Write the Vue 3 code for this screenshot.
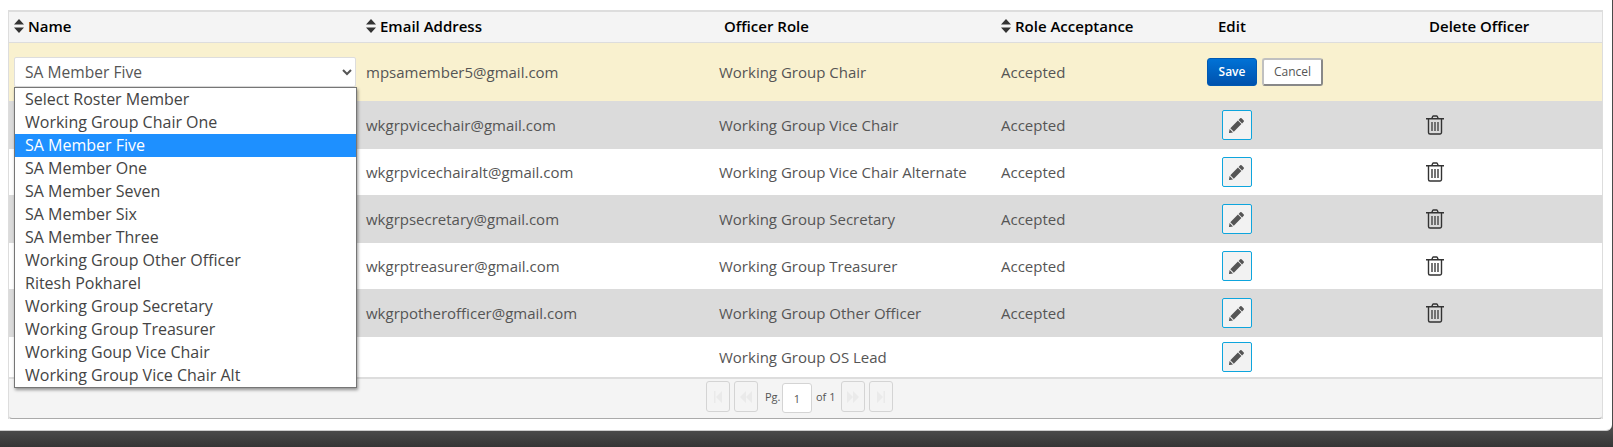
<script setup>
const options = ['Select Roster Member','Working Group Chair One','SA Member Five','SA Member One','SA Member Seven','SA Member Six','SA Member Three','Working Group Other Officer','Ritesh Pokharel','Working Group Secretary','Working Group Treasurer','Working Goup Vice Chair','Working Group Vice Chair Alt']
const rows = [
  { email: 'wkgrpvicechair@gmail.com', role: 'Working Group Vice Chair', acc: 'Accepted', del: true, cls: 'gray' },
  { email: 'wkgrpvicechairalt@gmail.com', role: 'Working Group Vice Chair Alternate', acc: 'Accepted', del: true, cls: 'white' },
  { email: 'wkgrpsecretary@gmail.com', role: 'Working Group Secretary', acc: 'Accepted', del: true, cls: 'gray' },
  { email: 'wkgrptreasurer@gmail.com', role: 'Working Group Treasurer', acc: 'Accepted', del: true, cls: 'white' },
  { email: 'wkgrpotherofficer@gmail.com', role: 'Working Group Other Officer', acc: 'Accepted', del: true, cls: 'gray' },
  { email: '', role: 'Working Group OS Lead', acc: '', del: false, cls: 'last' },
]
</script>

<template>
  <div class="page">
    <div class="modal">
      <div class="table">
        <div class="grid head">
          <div class="hc hc-name"><svg class="sort" viewBox="0 0 10 14"><path d="M5 0 10 5.6H0ZM5 14 0 8.4H10Z"/></svg>Name</div>
          <div class="hc hc-email"><svg class="sort" viewBox="0 0 10 14"><path d="M5 0 10 5.6H0ZM5 14 0 8.4H10Z"/></svg>Email Address</div>
          <div class="hc hc-role">Officer Role</div>
          <div class="hc hc-acc"><svg class="sort" viewBox="0 0 10 14"><path d="M5 0 10 5.6H0ZM5 14 0 8.4H10Z"/></svg>Role Acceptance</div>
          <div class="hc hc-edit">Edit</div>
          <div class="hc hc-del">Delete Officer</div>
        </div>
        <div class="grid row editing">
          <div class="cell cell-name">
            <select class="sel"><option>SA Member Five</option></select>
          </div>
          <div class="cell">mpsamember5@gmail.com</div>
          <div class="cell">Working Group Chair</div>
          <div class="cell">Accepted</div>
          <div class="cell btns">
            <button class="save">Save</button>
            <button class="cancel">Cancel</button>
          </div>
          <div class="cell"></div>
        </div>
        <div v-for="r in rows" :key="r.role" class="grid row" :class="r.cls">
          <div class="cell"></div>
          <div class="cell">{{ r.email }}</div>
          <div class="cell">{{ r.role }}</div>
          <div class="cell">{{ r.acc }}</div>
          <div class="cell">
            <button class="edit">
              <svg viewBox="0 0 16 16" class="pencil"><path d="M11.2 1.3a1 1 0 0 1 1.400 0l2.100 2.100a1 1 0 0 1 0 1.400l-1.600 1.600-3.500-3.500ZM8.900 3.600l3.500 3.500-7.600 7.600-3.500-3.500ZM.6 12l3.400 3.400-3.400.6a.5.5 0 0 1-.6-.6Z"/></svg>
            </button>
          </div>
          <div class="cell">
            <svg v-if="r.del" viewBox="0 0 18 20" class="trash"><path d="M0 3.800h18M2.500 4v13.500A1.500 1.500 0 0 0 4 19h10a1.500 1.500 0 0 0 1.500-1.500V4M5.800 3.500 6.800 1.300A.6.6 0 0 1 7.400 1h3.200a.6.6 0 0 1 .6.3l1 2.200" fill="none" stroke="#333" stroke-width="1.400"/><path d="M6 7v9M9 7v9M12 7v9" fill="none" stroke="#666" stroke-width="1.800"/></svg>
          </div>
        </div>
        <div class="foot">
          <div class="pager">
            <span class="pbtn"><svg viewBox="0 0 12 14" class="pi"><path d="M2 1v12h1.500V1ZM10 1 4 7l6 6Z"/></svg></span>
            <span class="pbtn"><svg viewBox="0 0 12 14" class="pi"><path d="M6 1 0 7l6 6ZM12 1 6 7l6 6Z"/></svg></span>
            <span class="pg">Pg.</span>
            <span class="pinput">1</span>
            <span class="of">of 1</span>
            <span class="pbtn"><svg viewBox="0 0 12 14" class="pi"><path d="M0 1l6 6-6 6ZM6 1l6 6-6 6Z"/></svg></span>
            <span class="pbtn"><svg viewBox="0 0 12 14" class="pi"><path d="M8.500 1v12H10V1ZM2 1l6 6-6 6Z"/></svg></span>
          </div>
        </div>
        <div class="menu">
          <div v-for="o in options" :key="o" class="opt" :class="{ on: o === 'SA Member Five' }">{{ o }}</div>
        </div>
      </div>
    </div>
  </div>
</template>

<style scoped>
.page { height: 447px; width: 1613px; background: linear-gradient(#4a4a4a 431px, #353535); font-family: "Open Sans", sans-serif; overflow: hidden; }
.modal { width: 1612px; height: 431px; box-sizing: border-box; background: #fff; padding: 10px 10px 0 8px; border-radius: 0 0 6px 0; border-bottom: 1px solid #ccc; }
.table { position: relative; border-left: 1px solid #ddd; border-right: 1px solid #ddd; width: 1595px; box-sizing: border-box; }
.grid { display: grid; grid-template-columns: 357px 353px 282px 206px 219px 176px; align-items: center; }
.head { height: 33px; box-sizing: border-box; border-top: 2px solid #ddd; border-bottom: 1px solid #ddd; background: #f4f4f4; font-size: 15px; font-weight: 600; color: #000; padding-bottom: 2px; }
.hc { display: flex; align-items: center; white-space: nowrap; }
.sort { width: 10px; height: 14px; margin-right: 4px; fill: #333; }
.hc-name { padding-left: 5px; }
.hc-role { padding-left: 5px; }
.hc-edit { padding-left: 11px; }
.hc-del { padding-left: 3px; }
.row { font-size: 15px; color: #555; }
.cell { white-space: nowrap; display: flex; align-items: center; padding-bottom: 1px; }
.editing { height: 58px; background: #f9f1cf; }
.gray { height: 48px; background: #dbdbdb; }
.white { height: 46px; background: #fff; }
.last { height: 40px; background: #fff; }
.cell-name { padding-left: 5px; }
.sel { width: 342px; height: 30px; box-sizing: border-box; border: 1px solid #ddd; background: #fff; color: #555; font: 15.600px "Open Sans", sans-serif; padding-left: 6px; border-radius: 2px; }
.btns { gap: 5px; }
.save { width: 50px; height: 28px; box-sizing: border-box; border: 1px solid #0059b3; border-radius: 3px; background: linear-gradient(#0072d6, #0052ad); color: #fff; font: 600 12px "Open Sans", sans-serif; padding: 0; }
.cancel { width: 61px; height: 28px; box-sizing: border-box; background: #fff; border: 2px solid #c0c0c0; border-right-color: #888; border-bottom-color: #888; border-radius: 3px; color: #555; font: 12px "Open Sans", sans-serif; padding: 0; }
.edit { margin-left: 15px; width: 30px; height: 30px; box-sizing: border-box; background: #f2f2f2; border: 1px solid #0ea5dd; border-radius: 2px; padding: 0; display: flex; align-items: center; justify-content: center; }
.pencil { width: 16px; height: 16px; fill: #555; }
.trash { width: 18px; height: 20px; }
.foot { height: 42px; box-sizing: border-box; background: #f4f4f4; border-top: 2px solid #ddd; border-bottom: 1px solid #aaa; border-radius: 0 0 4px 4px; position: relative; margin-left: -1px; margin-right: -1px; border-left: 1px solid #ddd; border-right: 1px solid #ddd; padding-left: 697px; padding-top: 2px; }
.pager { display: flex; align-items: flex-start; font-size: 11px; color: #555; height: 32px; }
.pbtn { width: 24px; height: 31px; box-sizing: border-box; border: 1px solid #d4d4d4; border-radius: 3px; display: flex; align-items: center; justify-content: center; margin-right: 4px; }
.pi { width: 12px; height: 14px; fill: #eaeaea; }
.pg { margin-left: 3px; width: 17px; line-height: 32px; }
.pinput { width: 30px; height: 30px; box-sizing: border-box; background: #fff; border: 1px solid #d4d4d4; border-radius: 3px; display: flex; align-items: center; justify-content: center; margin-top: 2px; }
.of { margin: 0 6px 0 4px; width: 19px; white-space: nowrap; line-height: 32px; }
.menu { position: absolute; left: 5px; top: 77px; width: 343px; height: 301px; box-sizing: border-box; background: #fff; border: 1px solid #767676; box-shadow: 1px 2px 3px rgba(0,0,0,.4); font-size: 16px; color: #444; }
.opt { height: 23px; line-height: 23px; padding-left: 10px; white-space: nowrap; }
.opt.on { background: #1e90ff; color: #fff; }
</style>
